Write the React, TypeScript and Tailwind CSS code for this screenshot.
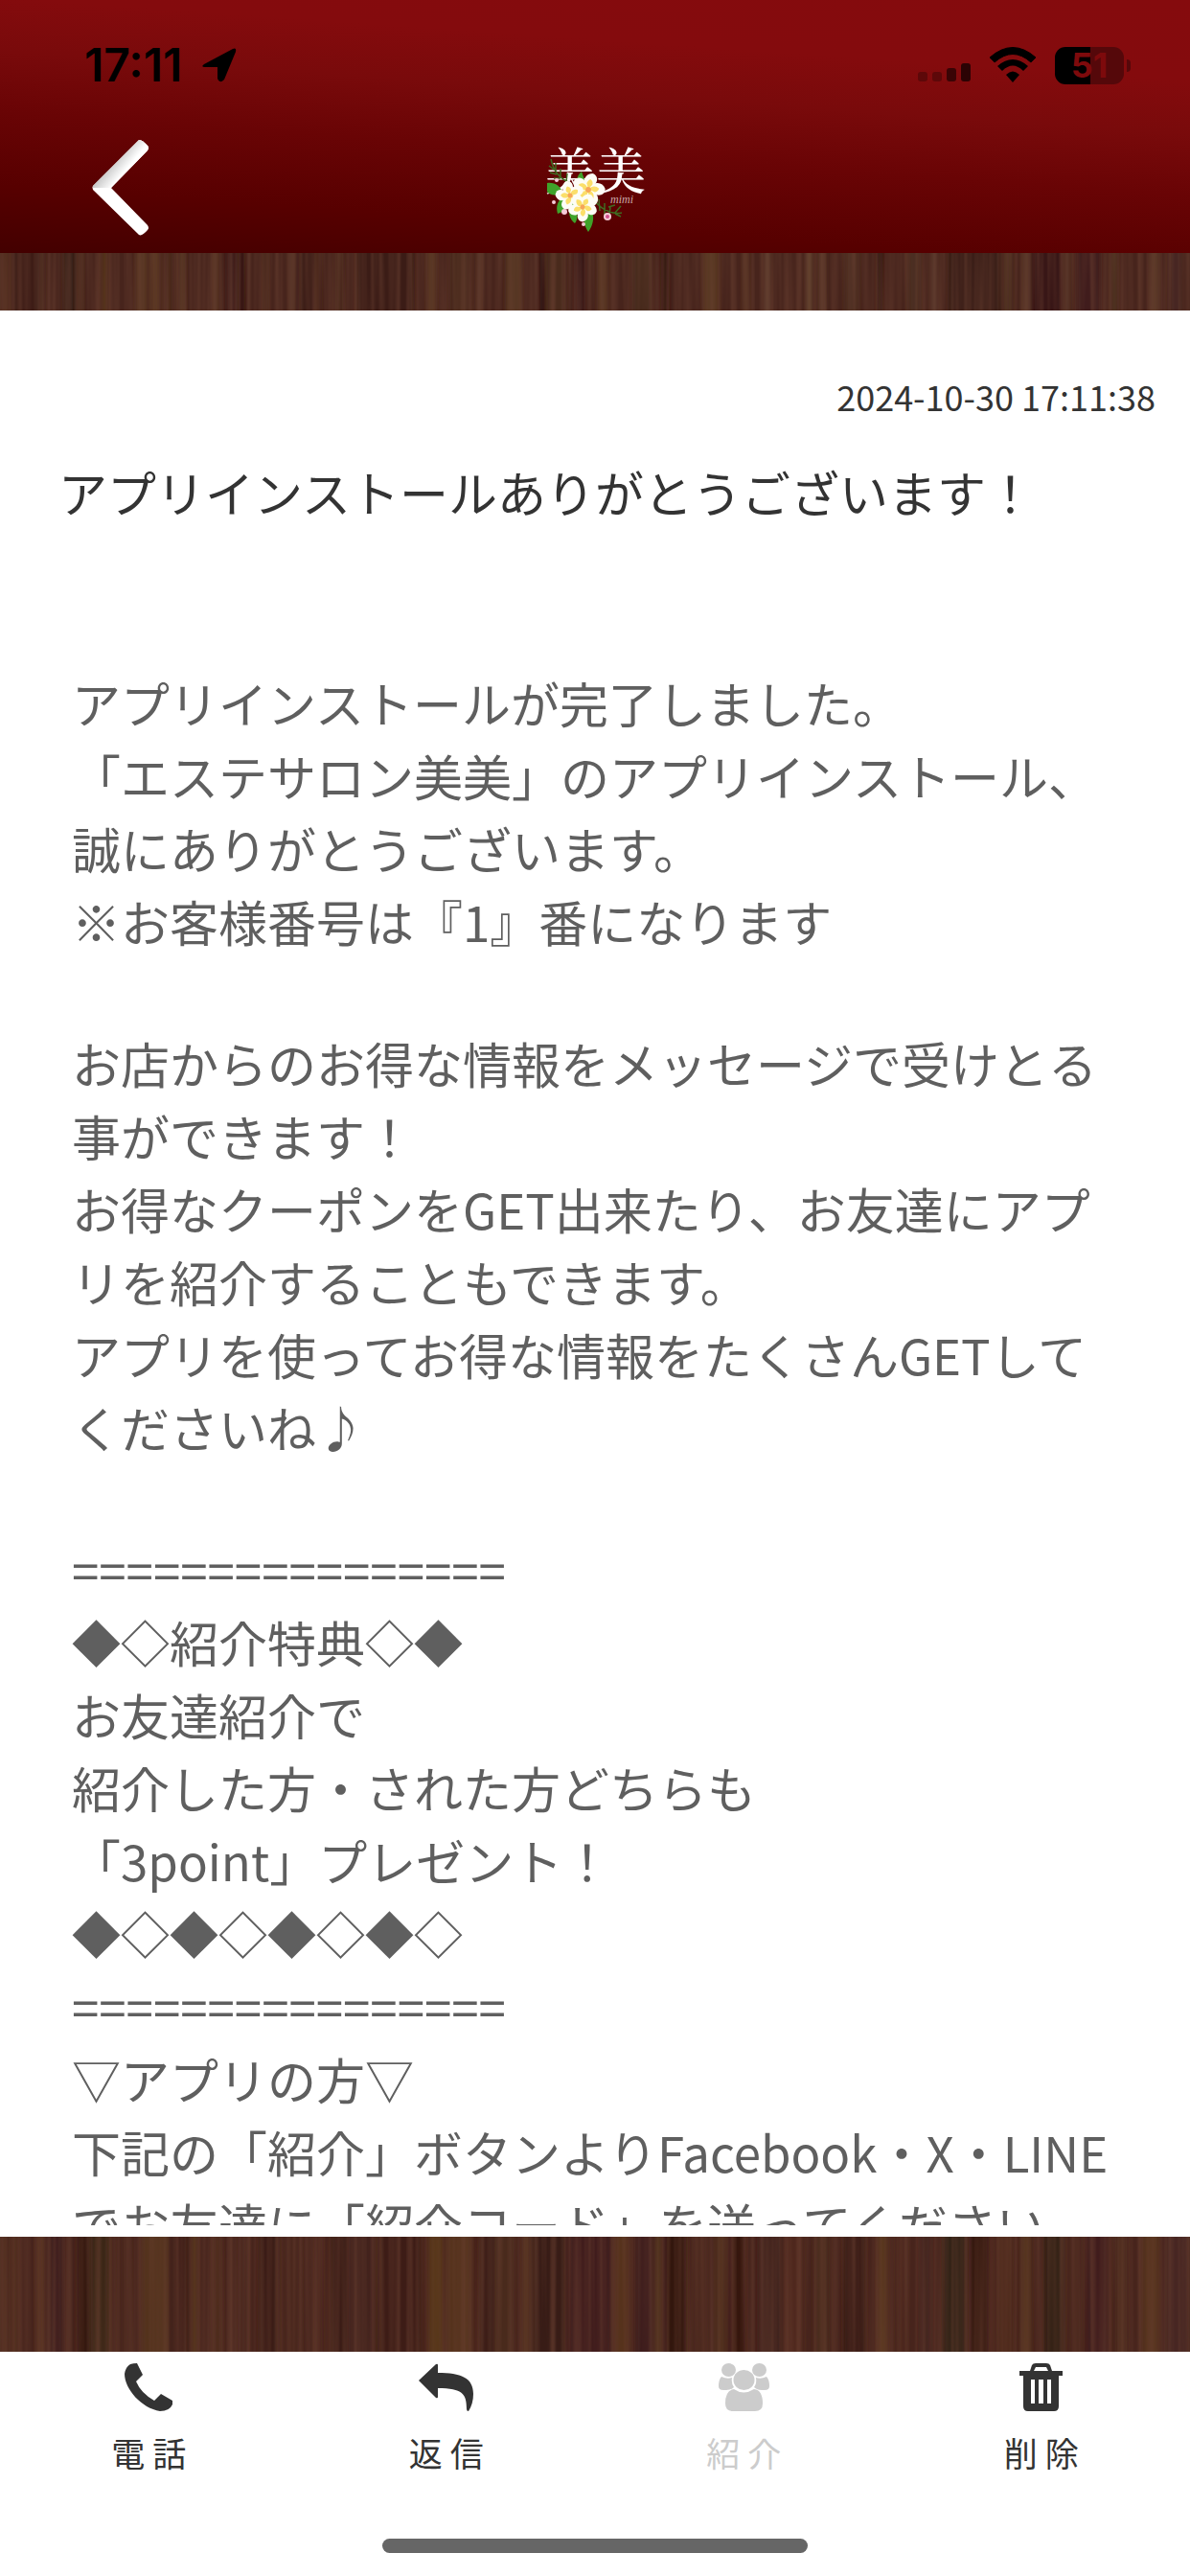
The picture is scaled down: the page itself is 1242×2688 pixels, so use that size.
import React from 'react';

const FONT = "font-['Noto_Sans_CJK_JP',sans-serif]";

type Stripe = [x: number, w: number, color: string];

const topStripes: Stripe[] = [
  [0, 12, '#4f2c1a'], [14, 26, '#3d1b19'], [42, 4, '#4a2a1d'], [66, 12, '#331a12'], [82, 4, '#4e2f1c'],
  [106, 6, '#55331d'], [142, 12, '#563420'], [158, 8, '#5a3820'], [174, 6, '#4c2b1c'], [188, 5, '#583722'],
  [223, 4, '#64412b'], [236, 10, '#361714'], [250, 5, '#301410'], [276, 3, '#553023'], [303, 3, '#6b4732'],
  [312, 18, '#3a1a17'], [330, 4, '#4c2a1e'], [350, 8, '#4b2a1c'], [372, 60, '#3b1b18'], [446, 9, '#573620'],
  [470, 20, '#482a1c'], [498, 4, '#5c3b2c'], [528, 16, '#553421'], [564, 4, '#2b110d'], [570, 20, '#4a291c'],
  [600, 10, '#351914'], [624, 10, '#573522'], [660, 20, '#462a1c'], [690, 8, '#331611'], [734, 16, '#583821'],
  [776, 5, '#573521'], [799, 4, '#6a4934'], [842, 5, '#6b4a32'], [855, 6, '#5c3a2a'], [882, 14, '#4e2f20'],
  [915, 6, '#2f140f'], [948, 12, '#4c2d20'], [973, 4, '#604030'], [990, 54, '#371b13'], [1048, 8, '#503020'],
  [1068, 6, '#5b3b2c'], [1078, 30, '#371914'], [1112, 4, '#5b3a2c'], [1124, 24, '#3f1c1c'], [1160, 6, '#4f3020'],
  [1200, 10, '#593925'], [1220, 14, '#472820'],
];

const bottomStripes: Stripe[] = [
  [0, 10, '#4d2c1f'], [14, 4, '#54301f'], [38, 8, '#573320'], [52, 14, '#3c1a1a'], [80, 12, '#30160f'],
  [94, 20, '#3a2516'], [124, 12, '#4a281b'], [148, 28, '#53301f'], [178, 18, '#3c1a18'], [200, 6, '#52301f'],
  [222, 10, '#4e2a1e'], [250, 8, '#4e2c20'], [270, 20, '#3a1d14'], [296, 18, '#48261b'], [330, 6, '#512c22'],
  [345, 16, '#3a1a15'], [362, 28, '#43231b'], [396, 44, '#3c1a18'], [448, 14, '#553419'], [466, 26, '#54311e'],
  [500, 14, '#3b1a18'], [516, 20, '#4a291c'], [546, 6, '#573621'], [556, 34, '#381a13'], [594, 44, '#3f1c1a'],
  [642, 14, '#56331f'], [664, 18, '#3d1a1b'], [684, 6, '#50301f'], [694, 22, '#331710'], [722, 18, '#48261b'],
  [746, 12, '#4f2f1e'], [762, 16, '#36180f'], [792, 24, '#41221a'], [818, 20, '#4d281d'], [850, 16, '#4a2a1d'],
  [880, 24, '#3b1e14'], [916, 10, '#56351f'], [936, 10, '#4b281f'], [960, 12, '#41201b'], [984, 24, '#332012'],
  [1012, 20, '#30150f'], [1040, 18, '#50291e'], [1066, 10, '#53311f'], [1090, 20, '#352013'], [1116, 14, '#4a281c'],
  [1134, 22, '#401d1c'], [1164, 12, '#4b2a1e'], [1192, 18, '#55301f'], [1216, 26, '#472520'],
];

function Wood({ id, stripes, className }: { id: string; stripes: Stripe[]; className: string }) {
  return (
    <div className={className} aria-hidden="true">
      <svg className="block h-full w-full" viewBox="0 0 1242 120" preserveAspectRatio="none">
        <defs>
          <filter id={`${id}-grain`} x="0" y="0" width="100%" height="100%">
            <feTurbulence type="fractalNoise" baseFrequency="0.16 0.002" numOctaves="2" seed="7" />
            <feColorMatrix values="0 0 0 0 0.14  0 0 0 0 0.05  0 0 0 0 0.03  1.2 0 0 0 -0.4" />
          </filter>
          <filter id={`${id}-soft`} x="0" y="0" width="100%" height="100%">
            <feGaussianBlur stdDeviation="2 0" />
          </filter>
        </defs>
        <rect width="1242" height="120" fill="#47241c" />
        <g filter={`url(#${id}-soft)`}>
          {stripes.map(([x, w, color]) => (
            <rect key={x} x={x} y="0" width={w} height="120" fill={color} />
          ))}
        </g>
        <rect width="1242" height="120" filter={`url(#${id}-grain)`} />
      </svg>
    </div>
  );
}

function Blossom({ x, y, r, turn = 0 }: { x: number; y: number; r: number; turn?: number }) {
  return (
    <g transform={`translate(${x} ${y}) rotate(${turn}) scale(${r / 10})`}>
      {[0, 72, 144, 216, 288].map((a) => (
        <g key={a} transform={`rotate(${a})`}>
          <path d="M0 0C-6 -3 -6 -9 -1 -11C4 -11 5 -5 0 0Z" fill="#fdfdf6" />
          <path d="M0 0C-3 -2 -3 -5 -1 -7C2 -6 2 -3 0 0Z" fill="#fbdf6a" />
        </g>
      ))}
      <circle r="1.8" fill="#f6a55a" />
    </g>
  );
}

function Logo() {
  return (
    <svg className="mb-2 h-[100px] w-[112px] overflow-visible" viewBox="0 0 112 100" role="img" aria-label="美美 mimi">
      <g fill="#fff" className="font-['Noto_Serif_CJK_JP','Noto_Sans_CJK_JP',serif]" fontSize="52" fontWeight="500">
        <text x="4" y="52">美</text>
        <text x="57" y="52">美</text>
      </g>
      <text x="72" y="66" fill="#c9a9a9" fontSize="12" fontStyle="italic" className="font-['Liberation_Serif',serif]">mimi</text>
      <g stroke="#3f6b22" strokeWidth="1.5" fill="none">
        <path d="M10 20C12 30 18 40 30 45M8 27l5 4M9 34l7 2M13 40l7 0M15 24l0 9M20 30l0 9M27 35l-1 9" />
        <path d="M56 64C64 74 76 78 84 76M60 62l1 12M66 66l0 12M72 70l-1 9M70 70l7 -2M77 76l6 -7M77 77l6 3" />
      </g>
      <g fill="#3fa32a">
        <path d="M6 45C14 44 20 48 22 55C16 59 9 58 6 54Z" />
        <path d="M26 58C16 62 15 70 17 77C24 75 29 70 28 60Z" />
        <path d="M30 66C27 75 30 84 35 87C39 82 38 72 34 66Z" />
        <path d="M46 74C42 82 46 92 49 96C54 89 56 80 52 73Z" />
        <path d="M42 33C36 38 36 44 40 50L46 44Z" />
      </g>
      <Blossom x={49} y={52} r={16} turn={20} />
      <Blossom x={30} y={58} r={14} turn={-10} />
      <Blossom x={43} y={70} r={14} turn={40} />
      <g fill="#f6cbd8">
        <circle cx="16" cy="42" r="2" />
        <circle cx="13" cy="65" r="2" />
        <circle cx="24" cy="75" r="3" />
        <circle cx="44" cy="88" r="2" />
        <circle cx="69" cy="80" r="4" />
      </g>
      <circle cx="69" cy="80" r="2" fill="#d0508c" />
    </svg>
  );
}

function StatusBar() {
  return (
    <div className="flex h-[136px] items-center justify-between pl-[88px] pr-[62px] font-[Inter,sans-serif]">
      <div className="flex items-center gap-5 text-black">
        <span className="text-[48px] font-semibold leading-none">17:11</span>
        <svg className="h-[38px] w-[38px]" viewBox="0 0 38 38" aria-hidden="true">
          <path d="M3 18L33 2Q37 0 36 5L24 34Q19 39 17 33V21H4Q-1 21 3 18Z" fill="#000" />
        </svg>
      </div>
      <div className="flex items-center gap-5">
        <svg className="h-10 w-[55px]" viewBox="0 0 55 40" aria-hidden="true">
          <rect x="0" y="27" width="10" height="10" rx="3" fill="#5d0809" />
          <rect x="15" y="27" width="10" height="10" rx="3" fill="#5d0809" />
          <rect x="30" y="23" width="10" height="14" rx="3" fill="#3a0405" />
          <rect x="45" y="18" width="10" height="19" rx="3" fill="#2b0304" />
        </svg>
        <svg className="h-10 w-12" viewBox="0 0 48 40" aria-hidden="true">
          <path d="M0 12Q24 -9 48 12L43 17Q24 0 5 17Z" fill="#000" stroke="#000" strokeWidth="1" strokeLinejoin="round" />
          <path d="M8 21Q24 7 40 21L35 26Q24 15 13 26Z" fill="#000" />
          <path d="M17 30Q24 23 31 30L24 38Z" fill="#000" />
        </svg>
        <div className="flex items-center gap-[3px]">
          <div className="flex h-[39px] w-[72px] items-center justify-center rounded-[11px] bg-[linear-gradient(to_right,#000_51%,#55080a_51%)] text-[36px] font-bold leading-none">
            <span className="text-[#7d0a0c]">51</span>
          </div>
          <div className="h-[13px] w-1 rounded-r-full bg-[#55080a]" />
        </div>
      </div>
    </div>
  );
}

const paragraphs: string[] = [
  `アプリインストールが完了しました。
「エステサロン美美」のアプリインストール、誠にありがとうございます。
※お客様番号は『1』番になります`,
  `お店からのお得な情報をメッセージで受けとる事ができます！
お得なクーポンをGET出来たり、お友達にアプリを紹介することもできます。
アプリを使ってお得な情報をたくさんGETしてくださいね♪`,
  `================
◆◇紹介特典◇◆
お友達紹介で
紹介した方・された方どちらも
「3point」プレゼント！
◆◇◆◇◆◇◆◇
================
▽アプリの方▽
下記の「紹介」ボタンよりFacebook・X・LINEでお友達に「紹介コード」を送ってください。`,
];

function PhoneIcon() {
  return (
    <svg className="h-[50px] w-[50px]" viewBox="0 0 50 50" fill="currentColor" aria-hidden="true">
      <path d="M6 1Q9 0 13 0L19 12L12 19Q17 31 31 39L38 32L50 39V43Q47 50 37 50C18 47 0 27 0 11Q1 4 6 1Z" />
    </svg>
  );
}

function ReplyIcon() {
  return (
    <svg className="h-[50px] w-[57px]" viewBox="0 0 57 50" fill="currentColor" aria-hidden="true">
      <path d="M0 18L18 1Q20 0 20 2V10C44 10 57 15 57 32Q57 42 52 50Q50 50 50 48C50 32 46 26 20 26V35Q20 37 18 36Z" />
    </svg>
  );
}

function PeopleIcon() {
  return (
    <svg className="h-[50px] w-[53px]" viewBox="0 0 53 50" fill="currentColor" aria-hidden="true">
      <ellipse cx="10.500" cy="7" rx="7.500" ry="7" />
      <ellipse cx="42.500" cy="7" rx="7.500" ry="7" />
      <ellipse cx="26.500" cy="17.500" rx="11" ry="10.500" />
      <path d="M3 14Q9 17 14 15Q13 21 16 25Q13 28 8 28H5Q0 28 0 24Q0 17 3 14Z" />
      <path d="M50 14Q44 17 39 15Q40 21 37 25Q40 28 45 28H48Q53 28 53 24Q53 17 50 14Z" />
      <path d="M16 27Q26 34 37 27Q46 28 46 42Q46 50 38 50H15Q7 50 7 42Q7 28 16 27Z" />
    </svg>
  );
}

function TrashIcon() {
  return (
    <svg className="h-[50px] w-[45px]" viewBox="0 0 45 50" fill="currentColor" aria-hidden="true">
      <path
        fillRule="evenodd"
        d="M0 8H11L13 2Q14 0 17 0H28Q31 0 32 2L34 8H45V13H41V45Q41 50 36 50H9Q4 50 4 45V13H0ZM15 8H30L28 4H17ZM12 17V42H16V17ZM20 17V42H25V17ZM29 17V42H33V17Z"
      />
    </svg>
  );
}

const actions = [
  { label: '電 話', Icon: PhoneIcon, disabled: false },
  { label: '返 信', Icon: ReplyIcon, disabled: false },
  { label: '紹 介', Icon: PeopleIcon, disabled: true },
  { label: '削 除', Icon: TrashIcon, disabled: false },
];

export default function App() {
  return (
    <div lang="ja" className={`flex h-screen flex-col bg-white text-[#333] ${FONT}`}>
      <header className="shrink-0 bg-[linear-gradient(184deg,#850b0d_0%,#840b0d_24%,#790a0b_40%,#690405_58%,#570000_80%,#430000_100%)]">
        <StatusBar />
        <div className="grid h-32 grid-cols-[1fr_auto_1fr] items-center">
          <button type="button" aria-label="戻る" className="mb-2 ml-24 w-[60px] justify-self-start">
            <svg className="block h-[102px] w-[60px]" viewBox="0 0 60 102" aria-hidden="true">
              <defs>
                <linearGradient id="chevron" gradientUnits="userSpaceOnUse" x1="22" y1="24" x2="34" y2="34">
                  <stop offset="0" stopColor="#c8c8c8" />
                  <stop offset="1" stopColor="#fff" />
                </linearGradient>
              </defs>
              <path d="M1 49L49 1Q52 0 58 7Q60 9 58 12L20 51L58 90Q60 93 58 95Q52 102 49 100L1 53Q0 51 1 49Z" fill="#fff" />
              <path d="M1 49L49 1Q52 0 58 7Q60 9 58 12L20 51L10 51L1 51Q0 51 1 49Z" fill="url(#chevron)" />
            </svg>
          </button>
          <Logo />
        </div>
      </header>

      <Wood id="wood-top" stripes={topStripes} className="h-[60px] shrink-0" />

      <main className="flex min-h-0 flex-1 flex-col bg-white pb-3">
        <div className="min-h-0 flex-1 overflow-hidden">
          <time dateTime="2024-10-30T17:11:38" className="block pr-9 pt-[62px] text-right text-[36px] leading-[54px]">
            2024-10-30 17:11:38
          </time>
          <h1 className="px-[61px] pt-[35px] text-[51px] font-normal leading-[76px]">
            アプリインストールありがとうございます！
          </h1>
          <article className="flex flex-col gap-[72px] px-[75px] pt-36 text-[51px] leading-[76px] text-[#5f5f5f]">
            {paragraphs.map((text) => (
              <p key={text} className="whitespace-pre-line">
                {text}
              </p>
            ))}
          </article>
        </div>
      </main>

      <Wood id="wood-bottom" stripes={bottomStripes} className="h-[120px] shrink-0" />

      <nav className="grid shrink-0 grid-cols-4 bg-white pt-3">
        {actions.map(({ label, Icon, disabled }) => (
          <button
            key={label}
            type="button"
            disabled={disabled}
            className="flex flex-col items-center gap-4 text-[35px] leading-[54px] text-[#333] disabled:text-[#ccc]"
          >
            <Icon />
            {label}
          </button>
        ))}
      </nav>
      <div className="flex h-[102px] shrink-0 items-end justify-center pb-6">
        <div className="h-[15px] w-[444px] rounded-full bg-[#666]" />
      </div>
    </div>
  );
}
